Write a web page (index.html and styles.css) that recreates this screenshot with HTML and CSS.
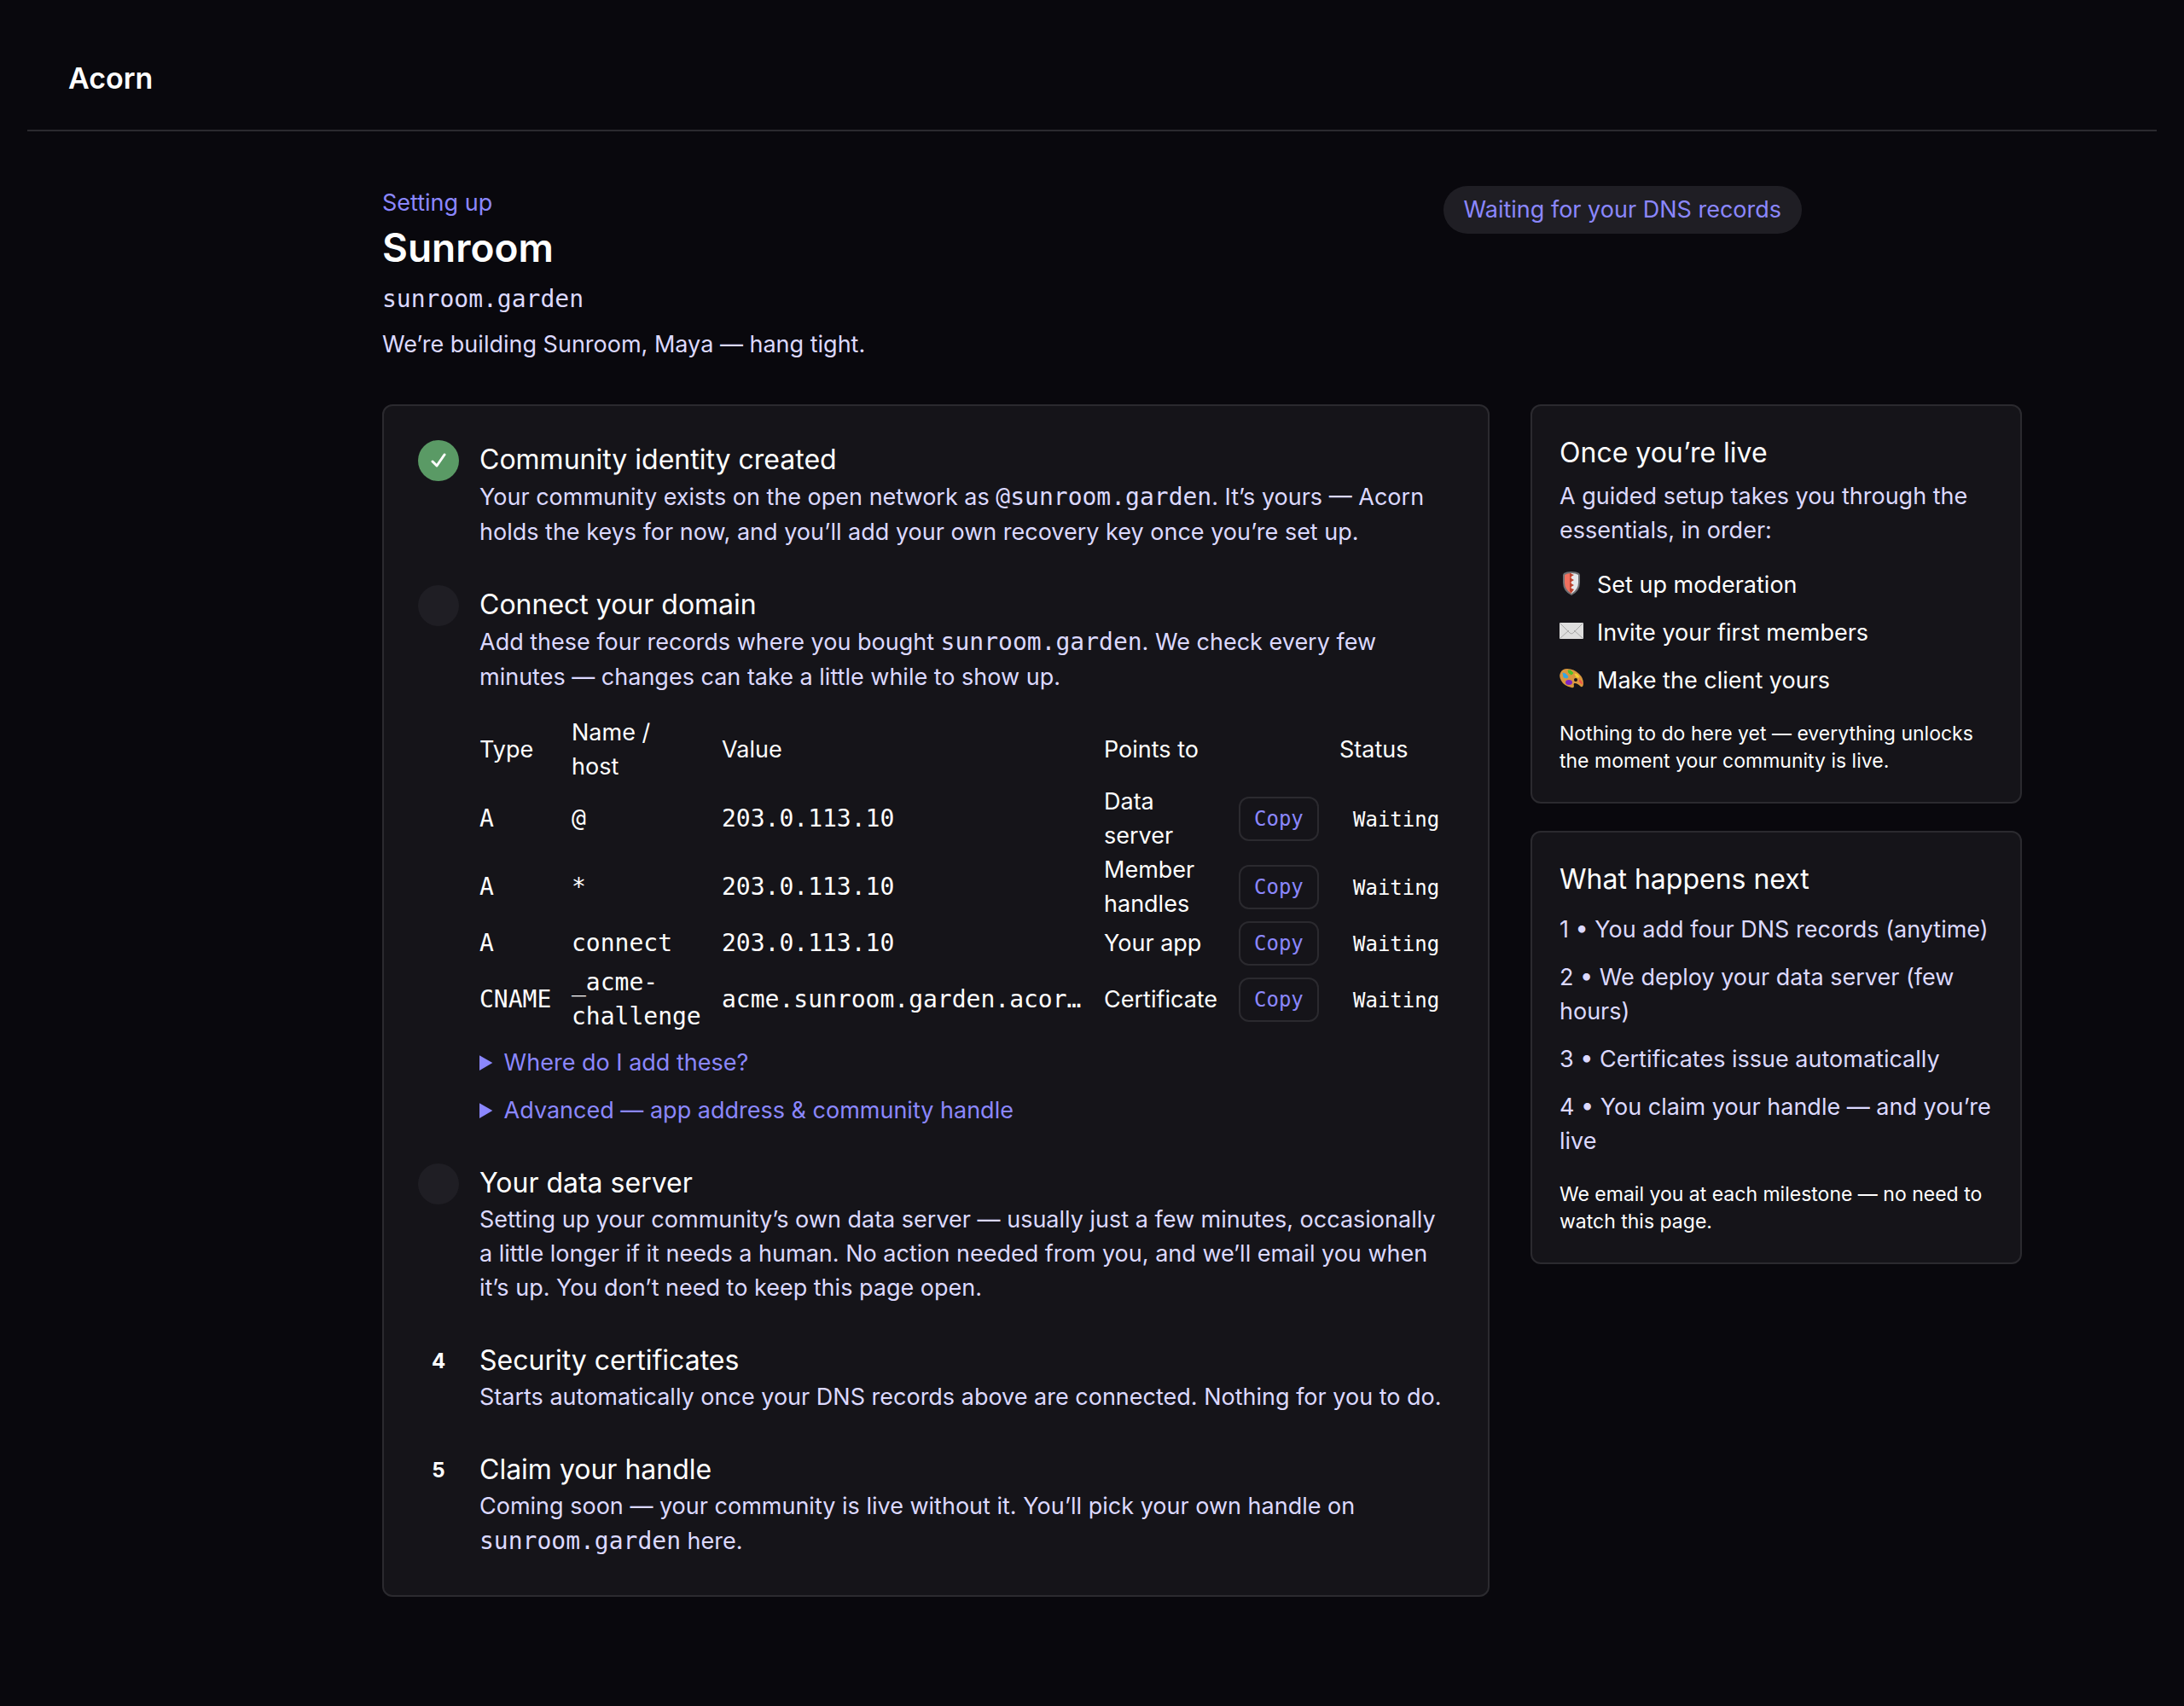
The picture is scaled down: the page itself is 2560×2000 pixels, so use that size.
FILE: index.html
```html
<!DOCTYPE html>
<html lang="en">

<head>
    <meta charset="UTF-8" />
    <meta name="viewport" content="width=device-width, initial-scale=1.0" />
    <title>Acorn</title>
    <link rel="stylesheet" href="styles.css">
</head>

<body>
    <header class="topbar">
        <a href="#" class="brand">Acorn</a>
    </header>

    <main class="container">
        <div class="intro">
            <div>
                <p class="eyebrow">Setting up</p>
                <h1>Sunroom</h1>
                <p class="domain"><code>sunroom.garden</code></p>
                <p class="soft">We’re building Sunroom, Maya — hang tight.</p>
            </div>
            <span class="badge">Waiting for your DNS records</span>
        </div>

        <div class="layout">
            <ol class="card steps">
                <li class="step">
                    <span class="marker done">
                        <svg viewBox="0 0 48 48" aria-hidden="true"><path d="M17 25l5 5 9-13" /></svg>
                    </span>
                    <div>
                        <h2>Community identity created</h2>
                        <p class="soft">Your community exists on the open network as <code>@sunroom.garden</code>. It’s yours — Acorn holds the keys for now, and you’ll add your own recovery key once you’re set up.</p>
                    </div>
                </li>
                <li class="step">
                    <span class="marker pending"></span>
                    <div>
                        <h2>Connect your domain</h2>
                        <p class="soft">Add these four records where you bought <code>sunroom.garden</code>. We check every few minutes — changes can take a little while to show up.</p>
                        <table class="records">
                            <colgroup>
                                <col class="col-type">
                                <col class="col-name">
                                <col class="col-value">
                                <col class="col-points">
                                <col class="col-copy">
                                <col>
                            </colgroup>
                            <thead>
                                <tr>
                                    <th>Type</th>
                                    <th>Name /<br>host</th>
                                    <th>Value</th>
                                    <th>Points to</th>
                                    <th></th>
                                    <th>Status</th>
                                </tr>
                            </thead>
                            <tbody>
                                <tr>
                                    <td class="mono">A</td>
                                    <td class="mono">@</td>
                                    <td class="mono">203.0.113.10</td>
                                    <td>Data<br>server</td>
                                    <td><button type="button" class="copy">Copy</button></td>
                                    <td><span class="status">Waiting</span></td>
                                </tr>
                                <tr>
                                    <td class="mono">A</td>
                                    <td class="mono">*</td>
                                    <td class="mono">203.0.113.10</td>
                                    <td>Member<br>handles</td>
                                    <td><button type="button" class="copy">Copy</button></td>
                                    <td><span class="status">Waiting</span></td>
                                </tr>
                                <tr>
                                    <td class="mono">A</td>
                                    <td class="mono">connect</td>
                                    <td class="mono">203.0.113.10</td>
                                    <td>Your app</td>
                                    <td><button type="button" class="copy">Copy</button></td>
                                    <td><span class="status">Waiting</span></td>
                                </tr>
                                <tr>
                                    <td class="mono">CNAME</td>
                                    <td class="mono">_acme-<br>challenge</td>
                                    <td class="mono">acme.sunroom.garden.acor…</td>
                                    <td>Certificate</td>
                                    <td><button type="button" class="copy">Copy</button></td>
                                    <td><span class="status">Waiting</span></td>
                                </tr>
                            </tbody>
                        </table>
                        <div class="help">
                            <details>
                                <summary>Where do I add these?</summary>
                            </details>
                            <details>
                                <summary>Advanced — app address &amp; community handle</summary>
                            </details>
                        </div>
                    </div>
                </li>
                <li class="step">
                    <span class="marker pending"></span>
                    <div>
                        <h2>Your data server</h2>
                        <p class="soft">Setting up your community’s own data server — usually just a few minutes, occasionally a little longer if it needs a human. No action needed from you, and we’ll email you when it’s up. You don’t need to keep this page open.</p>
                    </div>
                </li>
                <li class="step">
                    <span class="marker">4</span>
                    <div>
                        <h2>Security certificates</h2>
                        <p class="soft">Starts automatically once your DNS records above are connected. Nothing for you to do.</p>
                    </div>
                </li>
                <li class="step">
                    <span class="marker">5</span>
                    <div>
                        <h2>Claim your handle</h2>
                        <p class="soft">Coming soon — your community is live without it. You’ll pick your own handle on <code>sunroom.garden</code> here.</p>
                    </div>
                </li>
            </ol>

            <aside class="sidebar">
                <section class="card panel">
                    <h2>Once you’re live</h2>
                    <p class="soft lead">A guided setup takes you through the essentials, in order:</p>
                    <ul class="list todo">
                        <li>
                            <svg viewBox="0 0 28 28" aria-hidden="true">
                                <path d="M14 0q6 0 9 2l1 2v9q0 10-10 15Q4 23 4 13V4l1-2q3-2 9-2z" fill="#6f7073" />
                                <path d="M14 2q-5 0-8 2v9q0 8 8 13z" fill="#f0705f" />
                                <path d="M14 2q5 0 8 2v9q0 8-8 13z" fill="#e6e7ea" />
                                <path d="M12 2l5 2-5 3 5 3-5 3 5 3-5 3 5 2-3 4-2-2z" fill="#b9432f" />
                            </svg>
                            Set up moderation
                        </li>
                        <li>
                            <svg viewBox="0 0 28 28" aria-hidden="true">
                                <rect x="0" y="4" width="28" height="19" rx="1" fill="#dedede" />
                                <path d="M1 22l10-9M27 22l-10-9M1 5l11 11q2 2 4 0L27 5" fill="none" stroke="#a9a9a9" />
                            </svg>
                            Invite your first members
                        </li>
                        <li>
                            <svg viewBox="0 0 28 28" aria-hidden="true">
                                <path d="M1 7Q3 2 9 2q8 0 14 6q5 5 5 11q0 5-3 4q-4-4-7-4q-2 0-1 3q0 3-3 2Q5 22 2 16Q-1 11 1 7z" fill="#d9973e" />
                                <path d="M4 7l3 1 3 3-1 2-4-1z" fill="#35a7e0" stroke="#35a7e0" />
                                <path d="M10 4l3 0 3 3-2 2-3-2z" fill="#4fbf2a" stroke="#4fbf2a" />
                                <path d="M18 8l3 1 2 3-3 0z" fill="#f3d02f" stroke="#f3d02f" />
                                <path d="M23 15l2 1 2 4-3-2z" fill="#ef5548" stroke="#ef5548" />
                                <ellipse cx="11" cy="18" rx="4" ry="3" fill="#7d25c4" />
                                <circle cx="19" cy="15" r="2" fill="#151419" />
                            </svg>
                            Make the client yours
                        </li>
                    </ul>
                    <p class="note">Nothing to do here yet — everything unlocks the moment your community is live.</p>
                </section>

                <section class="card panel">
                    <h2>What happens next</h2>
                    <ul class="list soft next">
                        <li>1 • You add four DNS records (anytime)</li>
                        <li>2 • We deploy your data server (few hours)</li>
                        <li>3 • Certificates issue automatically</li>
                        <li>4 • You claim your handle — and you’re live</li>
                    </ul>
                    <p class="note">We email you at each milestone — no need to watch this page.</p>
                </section>
            </aside>
        </div>
    </main>
</body>

</html>
```
FILE: styles.css
```css
* {
    box-sizing: border-box;
}

body {
    margin: 0;
    padding: 32px;
    min-height: 100vh;
    background: #09080d;
    color: #fff;
    font-family: Inter, "Liberation Sans", sans-serif;
    font-size: 27px;
    line-height: 40px;
}

h1,
h2,
p,
ol,
ul {
    margin: 0;
    padding: 0;
    list-style: none;
}

code,
.mono,
.copy,
.status {
    font-family: "DejaVu Sans Mono", monospace;
}

code,
.mono {
    font-size: 28px;
}

code {
    line-height: 42px;
}

.topbar {
    padding: 32px 48px;
    border-bottom: 2px solid #2b2a2f;
}

.brand {
    color: #fff;
    font-size: 34px;
    font-weight: 600;
    line-height: 56px;
    text-decoration: none;
}

.container {
    max-width: 1664px;
    margin: 0 auto;
    padding: 64px 0;
}

.intro {
    display: flex;
    justify-content: space-between;
    align-items: flex-start;
    margin-bottom: 50px;
}

.eyebrow {
    color: #8b87ff;
}

h1 {
    font-size: 46px;
    font-weight: 600;
    line-height: 64px;
}

.domain {
    margin: 8px 0 12px;
    color: #dcd9ff;
}

.soft {
    color: #dcd9ff;
}

.badge {
    padding: 8px 24px;
    border-radius: 28px;
    background: #1f1e24;
    color: #8b87ff;
}

.layout {
    display: grid;
    grid-template-columns: minmax(1298px, 1fr) 576px;
    align-items: start;
    gap: 48px;
}

.card {
    border: 2px solid #2b2a2f;
    border-radius: 12px;
    background: #151419;
}

h2 {
    font-size: 32px;
    font-weight: 400;
    line-height: 46px;
}

.steps {
    display: flex;
    flex-direction: column;
    gap: 42px;
    padding: 40px 40px 42px;
}

.step {
    display: grid;
    grid-template-columns: 48px 1fr;
    gap: 24px;
}

.marker {
    display: flex;
    justify-content: center;
    align-items: center;
    height: 48px;
    border-radius: 50%;
    font-size: 24px;
    font-weight: 700;
}

.pending {
    background: #1f1e24;
}

.done {
    background: #5a9a65;
}

.done svg {
    width: 48px;
    fill: none;
    stroke: #fff;
    stroke-width: 3;
    stroke-linecap: round;
    stroke-linejoin: round;
}

.records {
    width: 100%;
    margin-top: 24px;
    border-collapse: collapse;
    table-layout: fixed;
}

.records th,
.records td {
    padding: 0;
    font-weight: 400;
    text-align: left;
    white-space: nowrap;
}

.records th {
    height: 82px;
}

.col-type {
    width: 108px;
}

.col-name {
    width: 176px;
}

.col-value {
    width: 448px;
}

.col-points {
    width: 158px;
}

.col-copy {
    width: 118px;
}

.copy {
    display: block;
    height: 52px;
    padding: 0 16px;
    border: 2px solid #2b2a2f;
    border-radius: 12px;
    background: none;
    color: #8b87ff;
    font-size: 24px;
    cursor: pointer;
}

.status {
    padding: 0 16px;
    font-size: 24px;
}

.help {
    display: grid;
    gap: 16px;
    margin-top: 14px;
}

summary {
    color: #8b87ff;
    cursor: pointer;
}

.sidebar {
    display: grid;
    gap: 32px;
}

.panel {
    padding: 32px;
}

.lead {
    padding-top: 8px;
}

.list {
    display: grid;
    gap: 16px;
    margin: 24px 0 26px;
}

.next {
    margin-top: 16px;
}

.todo li {
    display: flex;
    align-items: center;
    gap: 16px;
}

.todo svg {
    width: 28px;
    height: 28px;
    margin-bottom: 4px;
}

.note {
    font-size: 23px;
    line-height: 32px;
}
```
